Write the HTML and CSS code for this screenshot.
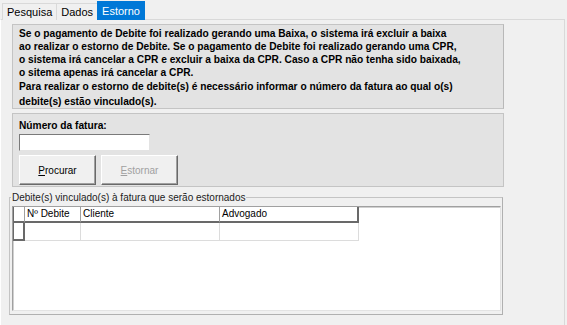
FILE: index.html
```html
<!DOCTYPE html>
<html lang="pt">
<head>
  <meta charset="UTF-8" />
  <title>Estorno de Debite</title>
  <link rel="stylesheet" href="styles.css">
</head>
<body>
  <div class="tabs">
    <div class="tab">Pesquisa</div>
    <div class="tab">Dados</div>
    <div class="tab active">Estorno</div>
  </div>

  <div class="tab-panel">
    <div class="info-box">
      <p>Se o pagamento de Debite foi realizado gerando uma Baixa, o sistema irá excluir a baixa<br>
      ao realizar o estorno de Debite. Se o pagamento de Debite foi realizado gerando uma CPR,<br>
      o sistema irá cancelar a CPR e excluir a baixa da CPR. Caso a CPR não tenha sido baixada,<br>
      o sitema apenas irá cancelar a CPR.</p>
      <p class="extra">Para realizar o estorno de debite(s) é necessário informar o número da fatura ao qual o(s)</p>
      <p class="extra">debite(s) estão vinculado(s).</p>
    </div>

    <div class="search-box">
      <label for="fatura">Número da fatura:</label>
      <input type="text" id="fatura" />
      <div class="buttons">
        <button type="button" class="btn"><u>P</u>rocurar</button>
        <button type="button" class="btn" disabled><u>E</u>stornar</button>
      </div>
    </div>

    <fieldset class="group">
      <legend>Debite(s) vinculado(s) à fatura que serão estornados</legend>
      <div class="grid">
        <div class="grid-row head">
          <div class="cell rh"></div>
          <div class="cell c1">Nº Debite</div>
          <div class="cell c2">Cliente</div>
          <div class="cell c3">Advogado</div>
        </div>
        <div class="grid-row">
          <div class="cell rh sel"></div>
          <div class="cell c1"></div>
          <div class="cell c2"></div>
          <div class="cell c3"></div>
        </div>
      </div>
    </fieldset>
  </div>
</body>
</html>
```

FILE: styles.css
```css
* {
  margin: 0;
  padding: 0;
  box-sizing: border-box;
}
body {
  width: 567px;
  height: 325px;
  background: #f0f0f0;
  font-family: 'Liberation Sans', Arial, sans-serif;
  font-size: 11px;
  color: #000;
  overflow: hidden;
}
.tabs {
  display: flex;
  padding: 2px 0 0 2px;
  height: 20px;
  align-items: flex-end;
}
.tab {
  height: 17px;
  padding: 2px 4px 0;
  border: 1px solid #d9d9d9;
  border-bottom: none;
  background: #f0f0f0;
  color: #000;
  margin-right: -1px;
}
.tab.active {
  height: 19px;
  padding-top: 3px;
  background: #0078d7;
  border-color: #0078d7;
  color: #fff;
  position: relative;
  z-index: 1;
}
.tab-panel {
  width: 565px;
  height: 306px;
  border: 1px solid #d9d9d9;
  border-left-color: #fff;
  border-bottom: none;
  margin-top: -1px;
  padding: 4px 0 0 11px;
}
.info-box {
  width: 492px;
  height: 85px;
  background: #e3e3e3;
  border: 1px solid #c4c4c4;
  border-right-color: #b8b8b8;
  padding: 2px 0 0 6px;
  font-weight: bold;
  font-size: 10.2px;
  line-height: 13px;
}
.info-box .extra {
  margin-top: 1px;
  line-height: 14px;
}
.search-box {
  width: 492px;
  height: 74px;
  margin-top: 4px;
  background: #e3e3e3;
  border: 1px solid #c4c4c4;
  padding: 5px 0 0 6px;
}
.search-box label {
  display: block;
  font-weight: bold;
  font-size: 10.2px;
  line-height: 13px;
}
.search-box input {
  display: block;
  width: 131px;
  height: 17px;
  margin-top: 2px;
  border: 1px solid #7a7a7a;
  border-color: #7a7a7a #e3e3e3 #e3e3e3 #7a7a7a;
  background: #fff;
  outline: none;
  font: inherit;
}
.buttons {
  display: flex;
  gap: 5px;
  margin-top: 4px;
}
.btn {
  width: 77px;
  height: 30px;
  background: #f0f0f0;
  border: 1px solid;
  border-color: #fff #696969 #696969 #fff;
  box-shadow: inset -1px -1px 0 #a0a0a0;
  font-family: 'Liberation Sans', Arial, sans-serif;
  font-size: 10px;
  color: #000;
}
.btn u {
  text-decoration: underline;
}
.btn:disabled {
  color: #a0a0a0;
}
.group {
  width: 494px;
  height: 123px;
  margin: 5px 0 0 -3px;
  border: 1px solid #c4c4c4;
  border-right-color: #b0b0b0;
  border-bottom-color: #b0b0b0;
  padding: 0 1px 2px 2px;
}
.group legend {
  font-size: 10px;
  color: #222;
  padding: 0 1px;
  margin-left: -1px;
}
.grid {
  height: 105px;
  background: #fff;
  border: 1px solid;
  border-color: #a0a0a0 #e3e3e3 #e3e3e3 #a0a0a0;
  box-shadow: inset 1px 1px 0 #d0d0d0;
  margin-top: 3px;
}
.grid-row {
  display: flex;
}
.cell {
  height: 18px;
  font-size: 10px;
  line-height: 15px;
  padding-left: 2px;
  border-right: 1px solid #dcdcdc;
  border-bottom: 1px solid #dcdcdc;
  background: #fff;
}
.head .cell {
  height: 16px;
  border-right: 1px solid #a0a0a0;
  border-bottom: 2px solid #696969;
  line-height: 14px;
}
.head .cell.c3 {
  border-right: 2px solid #696969;
}
.rh {
  width: 12px;
}
.head .cell.rh {
  border-left: 1px solid #696969;
}
.rh.sel {
  border-left: 1px solid #696969;
  border-right: 2px solid #696969;
  border-bottom: 2px solid #696969;
}
.c1 {
  width: 56px;
}
.c2 {
  width: 139px;
}
.c3 {
  width: 139px;
}
```
